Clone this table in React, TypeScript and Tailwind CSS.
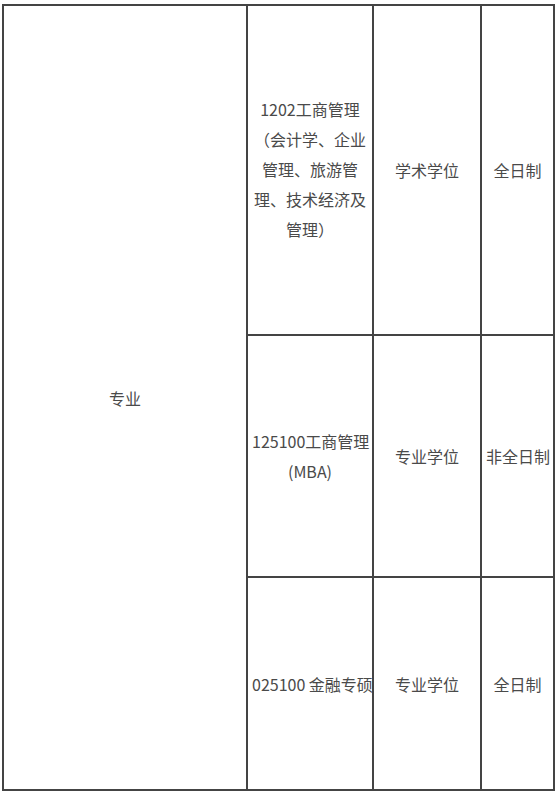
import React from "react";

const cell = "border-2 border-[#444] px-1 text-center align-middle";

export default function App() {
  return (
    <div
      className="min-h-[792px] bg-white pl-[2px] pt-[4px] text-[16px] leading-[30px] text-[#4a4a4a]"
      style={{ fontFamily: '"Noto Sans CJK SC", "Noto Sans", sans-serif' }}
    >
      <table className="w-[551px] table-fixed border-collapse">
        <colgroup>
          <col className="w-[244px]" />
          <col className="w-[126px]" />
          <col className="w-[108px]" />
          <col className="w-[73px]" />
        </colgroup>
        <tbody>
          <tr className="h-[330px]">
            <td rowSpan={3} className={cell}>
              专业
            </td>
            <td className={`${cell} pb-[3px]`}>
              <div>1202工商管理</div>
              <div>（会计学、企业</div>
              <div>管理、旅游管</div>
              <div>理、技术经济及</div>
              <div>管理）</div>
            </td>
            <td className={cell}>学术学位</td>
            <td className={cell}>全日制</td>
          </tr>
          <tr className="h-[242px]">
            <td className={cell}>
              <div className="whitespace-nowrap">125100工商管理</div>
              <div>(MBA)</div>
            </td>
            <td className={cell}>专业学位</td>
            <td className={`${cell} whitespace-nowrap`}>非全日制</td>
          </tr>
          <tr className="h-[213px]">
            <td className={`${cell} whitespace-nowrap px-0`}>025100 金融专硕</td>
            <td className={cell}>专业学位</td>
            <td className={cell}>全日制</td>
          </tr>
        </tbody>
      </table>
    </div>
  );
}
